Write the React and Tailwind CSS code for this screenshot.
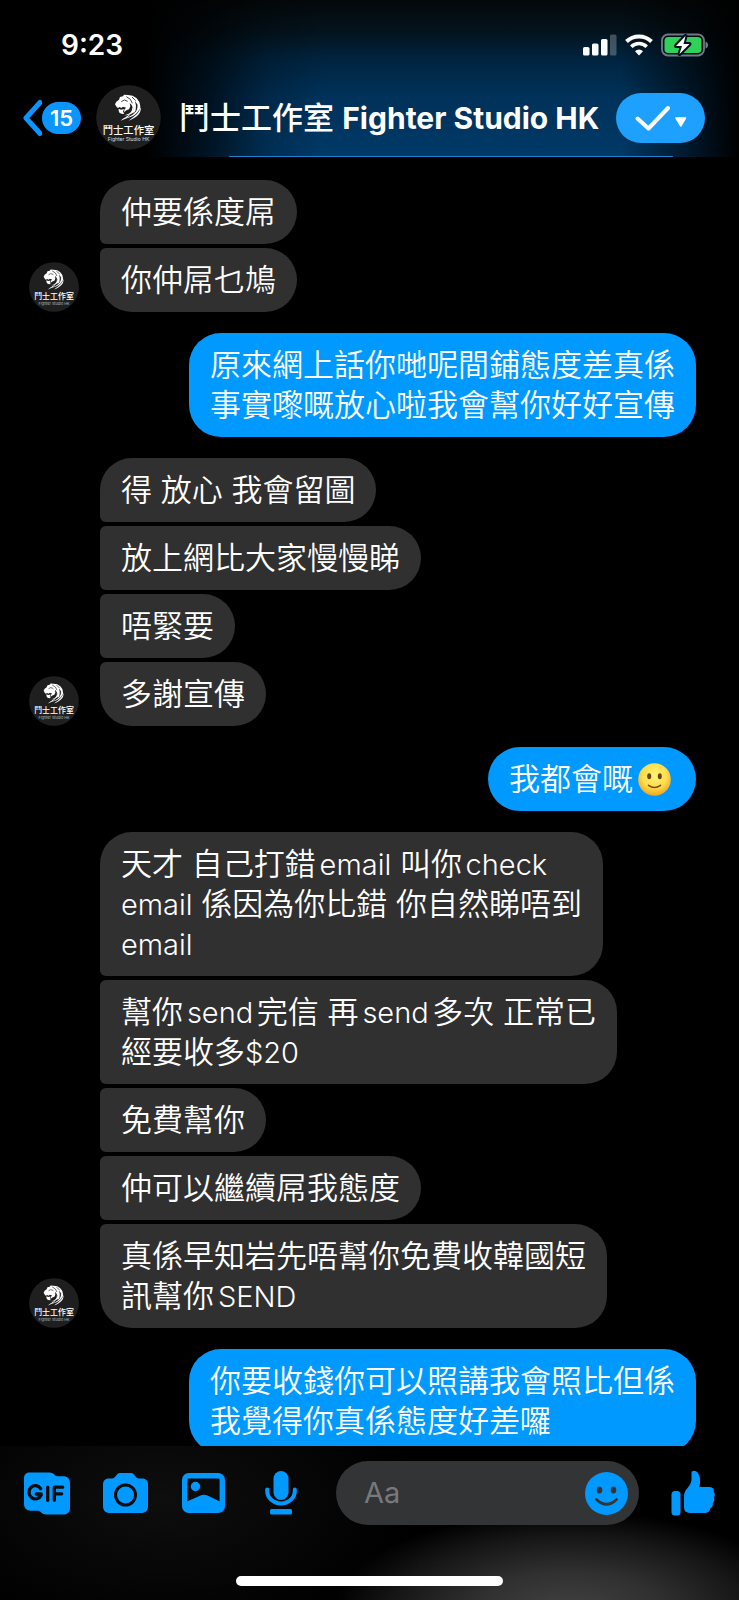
import React from "react";

const groups = [
  { from: "them", messages: ["仲要係度屌", "你仲屌乜鳩"] },
  { from: "me", messages: ["原來網上話你哋呢間鋪態度差真係\n事實嚟嘅放心啦我會幫你好好宣傳"] },
  {
    from: "them",
    messages: ["得 放心 我會留圖", "放上網比大家慢慢睇", "唔緊要", "多謝宣傳"],
  },
  { from: "me", messages: ["我都會嘅🙂"] },
  {
    from: "them",
    messages: [
      "天才 自己打錯email 叫你check\nemail 係因為你比錯 你自然睇唔到\nemail",
      "幫你send完信 再send多次 正常已\n經要收多$20",
      "免費幫你",
      "仲可以繼續屌我態度",
      "真係早知岩先唔幫你免費收韓國短\n訊幫你SEND",
    ],
  },
  { from: "me", messages: ["你要收錢你可以照講我會照比但係\n我覺得你真係態度好差囉"] },
];

function Smile() {
  return (
    <svg
      viewBox="0 0 33 33"
      className="inline-block w-[33px] h-[33px] ml-[5px] mr-1 align-[-6px]"
      role="img"
      aria-label="🙂"
    >
      <defs>
        <radialGradient id="face" cx="50%" cy="38%" r="62%">
          <stop offset="0" stopColor="#fff27a" />
          <stop offset="0.6" stopColor="#fede4c" />
          <stop offset="1" stopColor="#f2a51d" />
        </radialGradient>
      </defs>
      <circle cx="16.5" cy="16.5" r="16.3" fill="url(#face)" />
      <ellipse cx="11.2" cy="13.2" rx="2" ry="3" fill="#6b4208" />
      <ellipse cx="21.8" cy="13.2" rx="2" ry="3" fill="#6b4208" />
      <path d="M10.5 22.3q6 4.4 12 0" fill="none" stroke="#7a4a0a" strokeWidth="1.6" strokeLinecap="round" />
    </svg>
  );
}

function Avatar({ className }) {
  return (
    <svg viewBox="0 0 195 195" className={className} role="img" aria-label="鬥士工作室">
      <circle cx="97.5" cy="97.5" r="97" fill="#1f1f1f" />
      {/* lion head facing left, mane sweeping down */}
      <g fill="#fff">
        <path d="M57 58l4-8 8-6 3-8 9-2 3-5 12 1 14 2 12 8 8 11 3 13-2 12-6-16-8-12 3 14-1 14-6 10-1-14-5-12-6-6 2 10-4 9-8 3-7 6 1-8 5-6-9-3-5 4-5-3-5 3-4-3z" />
        <path d="M68 71l7 3 9-2-3 8 4 6-6 1-8-3-3-6z" />
        <path d="M108 66c3 12-5 21-24 25 12 0 26-4 32-14z" />
        <path d="M124 60c3 18-10 32-44 42 28-4 48-16 51-34z" />
        <path d="M134 66c3 16-8 30-36 41 8-8 30-17 36-41z" />
        <path d="M106 84c-6 10-16 18-32 23 8-8 20-12 32-23z" />
      </g>
      <path d="M76 50l9-5 10 4M91 35l12 8 6 12M108 36l11 11" stroke="#1f1f1f" strokeWidth="2.500" fill="none" />
      <text
        x="97.5"
        y="146"
        textAnchor="middle"
        fill="#fff"
        fontSize="31"
        fontWeight="500"
        fontFamily="'Noto Sans CJK TC', sans-serif"
      >
        鬥士工作室
      </text>
      <text
        x="97.5"
        y="167"
        textAnchor="middle"
        fill="#ddd"
        fontSize="15"
        fontFamily="Inter, sans-serif"
      >
        Fighter Studio HK
      </text>
    </svg>
  );
}

function StatusBar() {
  return (
    <div className="flex items-center h-[30px] pl-[61px] pr-[30px]">
      <span className="text-[28px] leading-[30px] font-semibold">9:23</span>
      <div className="ml-auto flex items-center gap-2">
        <svg viewBox="0 0 34 22" className="w-[34px] h-[22px]" fill="#fff">
          <rect x="0" y="13" width="6.5" height="8.5" rx="1.6" />
          <rect x="9" y="9.5" width="6.5" height="12" rx="1.6" />
          <rect x="18" y="5" width="6.5" height="16.5" rx="1.6" />
          <rect x="27" y="0.5" width="6.5" height="21" rx="1.6" opacity="0.25" />
        </svg>
        <svg viewBox="0 0 28 22" className="w-7 h-[22px]" fill="none" stroke="#fff">
          <path d="M1.5 7.5a18 18 0 0 1 25 0" strokeWidth="4" />
          <path d="M6.3 12.7a11 11 0 0 1 15.4 0" strokeWidth="3.6" />
          <path d="M14 21.5l-4-4.3a5.8 5.8 0 0 1 8 0z" fill="#fff" stroke="none" />
        </svg>
        <svg viewBox="0 0 48 24" className="w-12 h-6">
          <rect x="1" y="1.5" width="42" height="21" rx="6" fill="none" stroke="#6f7a85" strokeWidth="1.8" />
          <rect x="3.5" y="4" width="37" height="16" rx="3.8" fill="#30d158" />
          <path d="M44.5 8.5c3.5 1 3.5 6 0 7z" fill="#6f7a85" />
          <path
            d="M24.5 3L15 13h6l-2.5 8L28.5 11h-6z"
            fill="#fff"
            stroke="#02101f"
            strokeWidth="4"
            strokeLinejoin="round"
            paintOrder="stroke"
          />
        </svg>
      </div>
    </div>
  );
}

function Header() {
  return (
    <header className="shrink-0 pt-[30px] bg-[linear-gradient(to_right,#000_0%,#000_20%,#000000aa_28%,#00000033_36%,transparent_44%,transparent_84%,#000000b0_95%,#000_100%),linear-gradient(to_bottom,#04080a_0%,#03131d_20%,#002440_38%,#003159_60%,#003a68_100%)]">
      <StatusBar />
      <div className="mt-[25px] flex items-center pl-[22px] pr-[34px] pb-[6px]">
        <button className="flex items-center" aria-label="Back, 15 unread">
          <svg viewBox="0 0 20 38" className="w-5 h-[38px]" fill="none" stroke="#0a95ff" strokeWidth="5" strokeLinecap="round" strokeLinejoin="round">
            <path d="M18 3.5L4 19 18 34.5" />
          </svg>
          <span className="w-[39px] h-8 rounded-full bg-[#0a95ff] text-[22px] leading-8 font-semibold text-center">
            15
          </span>
        </button>
        <Avatar className="shrink-0 w-[65px] h-[65px] ml-[15px]" />
        <h1 className="ml-[18px] text-[31px] leading-10 font-medium whitespace-nowrap">
          鬥士工作室 <span className="text-[30px] leading-none font-bold">Fighter Studio HK</span>
        </h1>
        <button
          className="ml-auto shrink-0 w-[89px] h-[50px] rounded-full bg-[#1ea0ff] flex items-center justify-center"
          aria-label="Mark as done"
        >
          <svg viewBox="0 0 52 26" className="w-[52px] h-[26px]">
            <path d="M2.5 13.5l11 10L33 3" fill="none" stroke="#fff" strokeWidth="4" strokeLinecap="round" strokeLinejoin="round" />
            <path d="M41 13h9.5l-4.7 8z" fill="#fff" stroke="#fff" strokeWidth="1.5" strokeLinejoin="round" />
          </svg>
        </button>
      </div>
      <div className="h-px ml-[31%] mr-[9%] rounded-full bg-[#2280cc]" />
    </header>
  );
}

// Latin runs are set a little smaller so they sit level with the Chinese text
function MessageText({ text }) {
  return text.split(/([A-Za-z$0-9]+|🙂)/).map((part, i) => {
    if (part === "🙂") return <Smile key={i} />;
    if (i % 2) {
      return (
        <span key={i} className="text-[29px] leading-none">
          {part}
        </span>
      );
    }
    return part;
  });
}

function MessageGroup({ from, messages }) {
  if (from === "me") {
    return (
      <div className="flex flex-col items-end gap-1 pr-[43px]">
        {messages.map((text) => (
          <p key={text} className="bg-[#0099ff] rounded-[32px] px-[21px] py-3 whitespace-pre-line">
            <MessageText text={text} />
          </p>
        ))}
      </div>
    );
  }

  return (
    <div className="flex items-end pl-[29px]">
      <Avatar className="shrink-0 w-[50px] h-[50px] mr-[21px]" />
      <div className="flex flex-col items-start gap-1">
        {messages.map((text, i) => (
          <p
            key={text}
            className={`bg-[#303030] px-[21px] py-3 whitespace-pre-line rounded-r-[32px] ${
              i === 0 ? "rounded-tl-[32px]" : "rounded-tl-md"
            } ${i === messages.length - 1 ? "rounded-bl-[32px]" : "rounded-bl-md"}`}
          >
            <MessageText text={text} />
          </p>
        ))}
      </div>
    </div>
  );
}

function Composer() {
  const iconButton = "w-[46px] h-[46px] flex items-center justify-center shrink-0";

  return (
    <footer className="shrink-0 pt-[15px] pb-[14px] bg-[radial-gradient(ellipse_32%_66%_at_77%_108%,#424242_0%,#303030_40%,#161616_75%,transparent_100%),radial-gradient(ellipse_35%_90%_at_22%_35%,#0e0e0e_0%,#000_100%)]">
      <div className="flex items-center gap-8 px-6">
        <button className={iconButton} aria-label="GIF">
          <svg viewBox="0 0 47 43" className="w-[47px] h-[43px]">
            <path
              d="M6 0h20c3 0 4 1 5.5 2.5C32.5 3.5 33.5 4 35 4h5c4.5 0 7 2.5 7 7v25c0 4.5-2.5 7-7 7H23c-3 0-4.5-1-6-2.5-1-1-1.5-1.5-3-1.5H7c-4.5 0-7-2.5-7-7V6c0-4 2.5-6 6-6z"
              fill="#0099ff"
            />
            <g fill="none" stroke="#0a0c0e" strokeWidth="3.4" strokeLinecap="round" strokeLinejoin="round">
              <path d="M17 16.5a6.5 6.7 0 1 0 .5 6.5v-1h-5" />
              <path d="M24.2 15v13.5" />
              <path d="M39.5 15H31v13.5M31 21.8h7.5" />
            </g>
          </svg>
        </button>
        <button className={iconButton} aria-label="Camera">
          <svg viewBox="0 0 45 40" className="w-[45px] h-10">
            <path
              d="M17 0h11c3.5 0 4.5 5.5 8 5.5h3c4 0 6 2.5 6 6V33c0 4.5-2.5 7-7 7H7c-4.5 0-7-2.5-7-7V11.5c0-3.5 2-6 6-6h3C12.5 5.5 13.5 0 17 0z"
              fill="#0099ff"
            />
            <circle cx="22.5" cy="22" r="10" fill="none" stroke="#0a0c0e" strokeWidth="3" />
          </svg>
        </button>
        <button className={iconButton} aria-label="Photos">
          <svg viewBox="0 0 43 40" className="w-[43px] h-10">
            <rect x="2.7" y="2.7" width="37.6" height="34.6" rx="4" fill="none" stroke="#0099ff" strokeWidth="5.4" />
            <path d="M5 28.5l13.5-6c2.5-1 4.5-1 7 0L38 28.5V37H5z" fill="#0099ff" />
            <circle cx="13.5" cy="13.5" r="4.7" fill="#0099ff" />
          </svg>
        </button>
        <button className={iconButton} aria-label="Voice message">
          <svg viewBox="0 0 32 44" className="w-8 h-11">
            <rect x="8.5" y="0" width="15" height="29" rx="7.5" fill="#0099ff" />
            <path d="M2.2 18.5v1.5a13.8 12.5 0 0 0 27.6 0v-1.5" fill="none" stroke="#0099ff" strokeWidth="4" strokeLinecap="round" />
            <rect x="5" y="38" width="22" height="5.5" rx="1.5" fill="#0099ff" />
          </svg>
        </button>
        <div className="flex-1 min-w-0 flex items-center h-16 rounded-full bg-[#323435] pl-7 pr-[11px]">
          <input
            type="text"
            aria-label="Message"
            placeholder="Aa"
            className="flex-1 min-w-0 bg-transparent outline-none text-[29px] text-white placeholder:text-[#77797b]"
          />
          <button className="shrink-0" aria-label="Emoji">
            <svg viewBox="0 0 43 43" className="w-[43px] h-[43px]">
              <circle cx="21.5" cy="21.5" r="21.5" fill="#0099ff" />
              <ellipse cx="14.5" cy="18" rx="2.8" ry="3.6" fill="#323435" />
              <ellipse cx="28.5" cy="18" rx="2.8" ry="3.6" fill="#323435" />
              <path d="M11.5 27.5q10 9.5 20 0" fill="none" stroke="#323435" strokeWidth="2.8" strokeLinecap="round" />
            </svg>
          </button>
        </div>
        <button className="shrink-0" aria-label="Like">
          <svg viewBox="0 0 44 46" className="w-11 h-[46px]" fill="#0099ff">
            <rect x="0.5" y="21" width="9" height="24.5" rx="3.5" />
            <path d="M20.5 3C20.5 0 25.5 0 27.5 4c2 4 2 8.500.800 13h9.700c4 0 5.700 2.200 4.500 4.800 1.500 1.500 1.800 3.700.500 5.700.800 2 .300 4-1.300 5.500.500 2.500-.500 4.500-2.300 5.300-.500 3-2.400 4.700-6 4.700H21c-5.500 0-8-1.500-8-6V27c0-4 1-6 3.500-9 3-3.500 4-6 4-9z" />
          </svg>
        </button>
      </div>
      <div className="mt-[51px] mx-auto w-[36%] h-[10px] rounded-full bg-white" />
    </footer>
  );
}

export default function App() {
  return (
    <div className="h-screen flex flex-col bg-black text-white font-[Inter,'Noto_Sans_CJK_TC',sans-serif]">
      <Header />
      <main
        lang="zh-Hant"
        className="flex-1 min-h-0 overflow-hidden flex flex-col gap-[21px] pt-[23px] text-[31px] leading-10 font-[350] [text-autospace:normal]"
      >
        {groups.map((group, i) => (
          <MessageGroup key={i} from={group.from} messages={group.messages} />
        ))}
      </main>
      <Composer />
    </div>
  );
}
